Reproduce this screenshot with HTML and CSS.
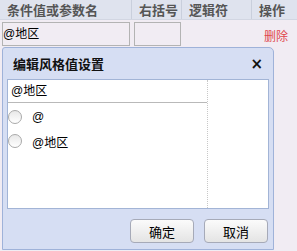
FILE: index.html
```html
<!DOCTYPE html>
<html lang="zh-CN">
<head>
    <meta charset="UTF-8">
    <title>编辑风格值设置</title>
    <link rel="stylesheet" href="styles.css">
</head>
<body>
    <div class="grid">
        <div class="grid-head">
            <div class="col col-name">条件值或参数名</div>
            <div class="col col-paren">右括号</div>
            <div class="col col-logic">逻辑符</div>
            <div class="col col-op">操作</div>
        </div>
        <div class="grid-row">
            <div class="col col-name"><div class="cell-box">@地区</div></div>
            <div class="col col-paren"><div class="cell-box"></div></div>
            <div class="col col-logic"></div>
            <div class="col col-op"><span class="del">删除</span></div>
        </div>
    </div>

    <div class="dialog">
        <div class="dialog-title">
            <span>编辑风格值设置</span>
            <span class="close">×</span>
        </div>
        <div class="dialog-body">
            <div class="list">
                <div class="list-input">@地区</div>
                <label class="opt"><span class="radio"></span>@</label>
                <label class="opt"><span class="radio"></span>@地区</label>
            </div>
            <div class="side"></div>
        </div>
        <div class="dialog-foot">
            <button class="btn">确定</button>
            <button class="btn">取消</button>
        </div>
    </div>
</body>
</html>
```

FILE: styles.css
```css
body {
    margin: 0;
    font-family: "Liberation Sans", "Noto Sans CJK SC", sans-serif;
    font-size: 12px;
    color: #000;
    background-color: #f1ecf3;
}
.grid-head {
    display: flex;
    height: 19px;
    background-color: #dfe3ee;
    border-bottom: 1px solid #d2d6e2;
}
.grid-head .col {
    display: flex;
    align-items: center;
    padding-left: 7px;
    box-sizing: border-box;
    font-size: 13px;
    font-weight: bold;
    color: #555;
    border-right: 1px solid #c9cfdc;
}
.col-name { width: 132px; }
.col-paren { width: 50px; }
.col-logic { width: 70px; }
.col-op { flex: 1; }
.grid-head .col-op { border-right: none; }
.grid-row {
    display: flex;
    height: 27px;
    padding-top: 2px;
    box-sizing: border-box;
}
.grid-row .col {
    display: flex;
    align-items: flex-start;
}
.grid-row .col-name { padding-left: 2px; width: 131px; }
.grid-row .col-paren { padding-left: 1px; width: 50px; }
.cell-box {
    width: 100%;
    height: 24px;
    margin-right: 3px;
    border: 1px solid #b3b3b3;
    line-height: 22px;
    font-size: 12px;
    box-sizing: border-box;
}
.grid-row .col-op {
    justify-content: flex-end;
    padding-right: 9px;
    padding-top: 5px;
}
.del {
    color: #e0474c;
    font-size: 12px;
}
.dialog {
    margin: 0 0 0 2px;
    width: 272px;
    height: 203px;
    box-sizing: border-box;
    background-color: #d6def3;
    border: 1px solid #9fb2d9;
    border-radius: 3px 5px 0 0;
    padding: 0 4px;
    display: flex;
    flex-direction: column;
}
.dialog-title {
    height: 31px;
    display: flex;
    align-items: center;
    justify-content: space-between;
    padding: 0 6px 0 6px;
    font-size: 13px;
    font-weight: bold;
    color: #111;
}
.close {
    font-size: 15px;
    font-family: "DejaVu Sans", sans-serif;
}
.dialog-body {
    display: flex;
    height: 130px;
    background-color: #fff;
    border: 1px solid #a2b4d6;
    box-sizing: border-box;
}
.list {
    width: 199px;
    border-right: 1px dotted #c8c8c8;
}
.list-input {
    height: 23px;
    line-height: 22px;
    padding-left: 3px;
    box-sizing: border-box;
    border-bottom: 1px solid #b9b9b9;
}
.opt {
    display: flex;
    align-items: center;
    height: 24px;
    padding-left: 0;
}
.opt:first-of-type { margin-top: 2px; }
.radio {
    width: 12px;
    height: 12px;
    border: 1px solid #a9a9a9;
    border-radius: 50%;
    background: linear-gradient(#e8e8e8, #fff);
    margin-right: 10px;
}
.side { flex: 1; }
.dialog-foot {
    display: flex;
    justify-content: flex-end;
    gap: 10px;
    padding-top: 10px;
    padding-right: 1px;
}
.btn {
    width: 64px;
    height: 24px;
    border: 1px solid #a6aab8;
    border-radius: 4px;
    background: linear-gradient(#fbfbfb, #e4e4e4);
    font-family: "Liberation Sans", "Noto Sans CJK SC", sans-serif;
    font-size: 13px;
    color: #000;
    padding: 0;
}
```
